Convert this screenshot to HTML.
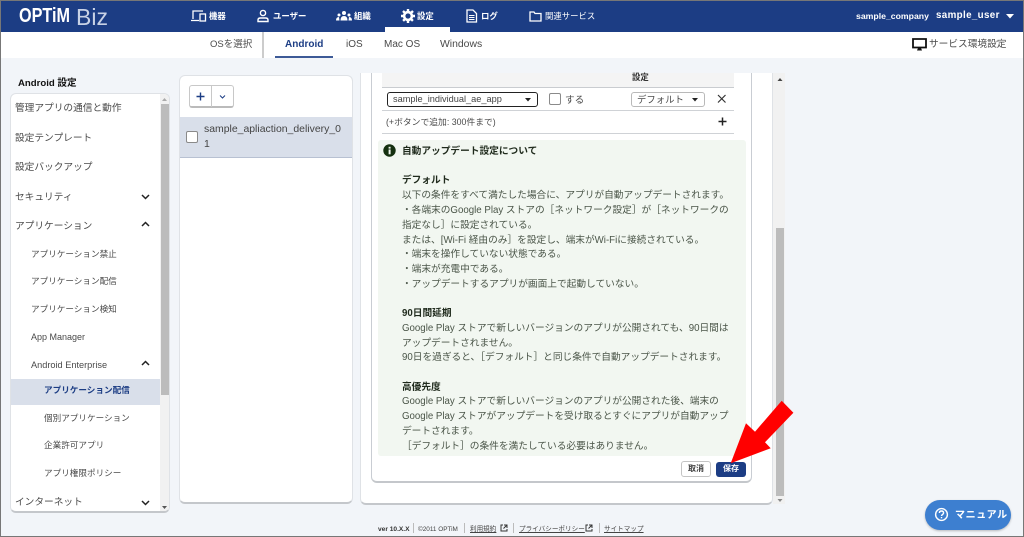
<!DOCTYPE html>
<html lang="ja"><head><meta charset="utf-8"><title>OPTiM Biz</title>
<style>
html,body{margin:0;padding:0;width:1024px;height:537px;overflow:hidden;background:#f2f5f9}
body{position:relative;font-family:"Liberation Sans","Noto Sans CJK JP",sans-serif;color:#444}
.a{position:absolute;box-sizing:border-box}
.t{position:absolute;white-space:nowrap;height:16px;line-height:16px;font-size:9.7px;color:#4a4a4a}
.m{margin-top:2px}
.h{color:#fff;font-size:8.4px;font-weight:700}
.s{font-size:8.6px}
.d{left:402px;font-size:9.7px;color:#4a5548;margin-top:2px}
.b{font-weight:700;color:#1f2a1c}
svg{position:absolute;overflow:visible}
</style></head><body>

<div class="a" style="left:0;top:0;width:1024px;height:32px;background:#1c3d84"></div>
<div class="a" style="left:385px;top:27px;width:65px;height:5px;background:#fff"></div>
<div class="a" style="left:0;top:32px;width:1024px;height:26px;background:#fff"></div>
<div class="a" style="left:262px;top:32px;width:2px;height:26px;background:#ccc"></div>
<div class="a" style="left:275px;top:56px;width:58px;height:2px;background:#3d5a97"></div>

<div class="t" style="left:19px;top:6px;height:20px;line-height:20px;font-size:20px;font-weight:700;color:#fff;transform:scaleX(.81);transform-origin:left">OPTiM</div>
<div class="t" style="left:76px;top:3px;height:28px;line-height:28px;font-size:23px;color:#c8d2e6">Biz</div>

<svg style="left:191px;top:9px" width="16" height="14" fill="none" stroke="#fff" stroke-width="1.3"><path d="M2 10V2H12M0 11.5H8"/><rect x="9" y="5" width="5.5" height="7"/></svg>
<div class="t h" style="left:209px;top:8px">機器</div>
<svg style="left:257px;top:9px" width="14" height="14" fill="none" stroke="#fff" stroke-width="1.4"><circle cx="6" cy="4" r="2.6"/><path d="M1 12.5V11Q1 9 3.5 9H8.5Q11 9 11 11V12.5Z"/></svg>
<div class="t h" style="left:273px;top:8px">ユーザー</div>
<svg style="left:336px;top:10px" width="16" height="12" fill="#fff"><circle cx="8" cy="3" r="2"/><circle cx="3" cy="5" r="1.5"/><circle cx="13" cy="5" r="1.5"/><path d="M4.5 10.5Q4.500 6 8 6T11.500 10.500ZM0 10.500Q0 7 3 7L3.500 10.500ZM16 10.500Q16 7 13 7L12.500 10.500Z"/></svg>
<div class="t h" style="left:354px;top:8px">組織</div>
<svg style="left:401px;top:9px" width="14" height="14" viewBox="0 0 14 14"><circle cx="7" cy="7" r="3.900" fill="none" stroke="#fff" stroke-width="2.600"/><path d="M7 0V14M0 7H14M2 2L12 12M12 2L2 12" stroke="#fff" stroke-width="2.400" stroke-dasharray="2.400 9.200 2.400 20"/></svg>
<div class="t h" style="left:417px;top:8px">設定</div>
<svg style="left:466px;top:9px" width="12" height="14" fill="none" stroke="#fff" stroke-width="1.300"><path d="M1 1H7L10.500 4.500V13H1Z"/><path d="M3 6.500H8.500M3 8.500H8.500M3 10.500H8.500" stroke-width="1"/></svg>
<div class="t h" style="left:481px;top:8px">ログ</div>
<svg style="left:529px;top:11px" width="13" height="11" fill="none" stroke="#fff" stroke-width="1.300"><path d="M1 1H5L6 2.500H12V10H1Z"/></svg>
<div class="t h" style="left:545px;top:8px;font-weight:400">関連サービス</div>
<div class="t h" style="left:856px;top:8px;font-size:8.700px">sample_company</div>
<div class="t h" style="left:936px;top:8px;font-size:9.800px;letter-spacing:.35px">sample_user</div>
<svg style="left:1006px;top:14px" width="9" height="5"><path d="M0 0H8L4 4.500Z" fill="#fff"/></svg>

<div class="t" style="left:210px;top:37px;font-size:9.500px">OSを選択</div>
<div class="t" style="left:285px;top:37px;font-weight:700;color:#1c3d84;font-size:10px">Android</div>
<div class="t" style="left:346px;top:37px;font-size:10px">iOS</div>
<div class="t" style="left:384px;top:37px;font-size:10px">Mac OS</div>
<div class="t" style="left:440px;top:37px;font-size:10.400px">Windows</div>
<svg style="left:912px;top:38px" width="15" height="13"><path d="M1 1H14V9.500H1Z" fill="#fff" stroke="#111" stroke-width="1.800"/><path d="M5 12.500H10L9 10H6Z" fill="#111"/></svg>
<div class="t" style="left:929px;top:37px;font-size:9.700px">サービス環境設定</div>

<div class="t m" style="left:18px;top:74px;font-weight:700;color:#111;font-size:9.600px">Android 設定</div>

<div class="a" style="left:10px;top:93px;width:160px;height:420px;background:#fff;border:1px solid #dfe2e6;border-bottom:2px solid #c4c7cb;border-radius:6px;overflow:hidden">
  <div class="a" style="left:149px;top:0;width:10px;height:420px;background:#f1f1f1"></div>
  <div class="a" style="left:150px;top:10px;width:8px;height:291px;background:#bcbcbc"></div>
  <div class="a" style="left:0;top:285px;width:149px;height:26px;background:#d9dfea"></div>
</div>
<svg style="left:160px;top:97px" width="9" height="5"><path d="M2 4H7L4.500 1Z" fill="#aaa"/></svg>
<svg style="left:160px;top:505px" width="9" height="5"><path d="M2 1H7L4.500 4Z" fill="#555"/></svg>

<div class="t m" style="left:15px;top:99px">管理アプリの通信と動作</div>
<div class="t m" style="left:15px;top:129px">設定テンプレート</div>
<div class="t m" style="left:15px;top:158px">設定バックアップ</div>
<div class="t m" style="left:15px;top:188px">セキュリティ</div>
<div class="t m" style="left:15px;top:217px">アプリケーション</div>
<div class="t s" style="left:31px;top:246px">アプリケーション禁止</div>
<div class="t s" style="left:31px;top:273px">アプリケーション配信</div>
<div class="t s" style="left:31px;top:301px">アプリケーション検知</div>
<div class="t s" style="left:31px;top:329px;font-size:9px">App Manager</div>
<div class="t s" style="left:31px;top:357px;font-size:9.200px">Android Enterprise</div>
<div class="t s" style="left:44px;top:382px;font-weight:700;color:#1c3d84">アプリケーション配信</div>
<div class="t s" style="left:44px;top:410px">個別アプリケーション</div>
<div class="t s" style="left:44px;top:437px">企業許可アプリ</div>
<div class="t s" style="left:44px;top:465px">アプリ権限ポリシー</div>
<div class="t m" style="left:15px;top:493px">インターネット</div>
<svg style="left:141px;top:194px" width="9" height="6" fill="none" stroke="#222" stroke-width="1.500"><path d="M1 1L4.500 4.500L8 1"/></svg>
<svg style="left:141px;top:221px" width="9" height="6" fill="none" stroke="#222" stroke-width="1.500"><path d="M1 5L4.500 1.500L8 5"/></svg>
<svg style="left:141px;top:360px" width="9" height="6" fill="none" stroke="#222" stroke-width="1.500"><path d="M1 5L4.500 1.500L8 5"/></svg>
<svg style="left:141px;top:500px" width="9" height="6" fill="none" stroke="#222" stroke-width="1.500"><path d="M1 1L4.500 4.500L8 1"/></svg>

<div class="a" style="left:179px;top:75px;width:174px;height:429px;background:#fff;border:1px solid #dfe2e6;border-bottom:2px solid #c4c7cb;border-radius:6px;overflow:hidden">
  <div class="a" style="left:0;top:41px;width:172px;height:41px;background:#d9dfea;border-bottom:1px solid #b8c1d2"></div>
</div>
<div class="a" style="left:189px;top:85px;width:45px;height:23px;background:#fff;border:1px solid #c8c8c8;border-bottom:2px solid #bbb;border-radius:3px"></div>
<div class="a" style="left:211px;top:85px;width:1px;height:22px;background:#c8c8c8"></div>
<svg style="left:196px;top:92px" width="9" height="9"><path d="M4.500 .500V8.500M.500 4.500H8.500" stroke="#1c3d84" stroke-width="1.400"/></svg>
<svg style="left:219px;top:95px" width="7" height="4" fill="none" stroke="#1c3d84" stroke-width="1"><path d="M1 .500L3.500 3L6 .500"/></svg>
<div class="a" style="left:186px;top:131px;width:12px;height:12px;background:#fff;border:1px solid #8a8a8a;border-radius:2px"></div>
<div class="t" style="left:204px;top:122px;font-size:10.450px;color:#444">sample_apliaction_delivery_0</div>
<div class="t" style="left:204px;top:136px;font-size:10.500px;color:#444">1</div>

<div class="a" style="left:360px;top:73px;width:413px;height:432px;background:#fff;border:1px solid #dfe2e6;border-top:0;border-bottom:2px solid #c4c7cb;border-radius:0 0 6px 6px"></div>
<div class="a" style="left:773px;top:73px;width:12px;height:431px;background:#f1f1f1"></div>
<div class="a" style="left:776px;top:228px;width:8px;height:268px;background:#bcbcbc"></div>
<svg style="left:776px;top:77px" width="8" height="5"><path d="M1.500 4H6.500L4 1Z" fill="#444"/></svg>
<svg style="left:776px;top:498px" width="8" height="5"><path d="M1.500 1H6.500L4 4Z" fill="#888"/></svg>

<div class="a" style="left:371px;top:73px;width:381px;height:410px;background:#fff;border:1px solid #c9cdd3;border-top:0;border-bottom:2px solid #c4c7cb;border-radius:0 0 6px 6px"></div>
<div class="a" style="left:382px;top:73px;width:352px;height:15px;background:#f4f4f4;border-bottom:1px solid #c9ccd0"></div>
<div class="t b" style="left:632px;top:69px;font-size:8.400px;color:#333">設定</div>
<div class="a" style="left:382px;top:110px;width:352px;height:1px;background:#cfd2d6"></div>
<div class="a" style="left:382px;top:133px;width:352px;height:1px;background:#cfd2d6"></div>

<div class="a" style="left:387px;top:92px;width:151px;height:15px;background:#fff;border:1px solid #222;border-radius:3px"></div>
<div class="t" style="left:393px;top:91px;font-size:9.200px;color:#444">sample_individual_ae_app</div>
<svg style="left:525px;top:98px" width="7" height="4"><path d="M0 0H6L3 3.500Z" fill="#222"/></svg>
<div class="a" style="left:549px;top:93px;width:12px;height:12px;background:#fff;border:1px solid #8a8a8a;border-radius:2px"></div>
<div class="t m" style="left:565px;top:91px;font-size:9.600px">する</div>
<div class="a" style="left:631px;top:92px;width:74px;height:15px;background:#fff;border:1px solid #b9b9b9;border-radius:3px"></div>
<div class="t" style="left:637px;top:92px;font-size:9.400px">デフォルト</div>
<svg style="left:692px;top:98px" width="7" height="4"><path d="M0 0H6L3 3.500Z" fill="#222"/></svg>
<svg style="left:717px;top:94px" width="10" height="10"><path d="M1 1L8.500 8.500M8.500 1L1 8.500" stroke="#333" stroke-width="1.200"/></svg>
<div class="t" style="left:386px;top:114px;font-size:8.800px">(+ボタンで追加: 300件まで)</div>
<svg style="left:718px;top:117px" width="9" height="9"><path d="M4.500 .500V8.500M.500 4.500H8.500" stroke="#222" stroke-width="1.500"/></svg>

<div class="a" style="left:378px;top:140px;width:368px;height:316px;background:#f2f7f1;border-radius:3px"></div>
<svg style="left:383px;top:144px" width="13" height="13"><circle cx="6.500" cy="6.500" r="6.200" fill="#14300f"/><rect x="5.600" y="5.500" width="2" height="4.800" fill="#f2f7f1"/><rect x="5.600" y="2.800" width="2" height="1.800" fill="#f2f7f1"/></svg>

<div class="t d b" style="top:142px">自動アップデート設定について</div>
<div class="t d b" style="top:171px">デフォルト</div>
<div class="t d" style="top:186px">以下の条件をすべて満たした場合に、アプリが自動アップデートされます。</div>
<div class="t d" style="top:201px">・各端末のGoogle Play ストアの［ネットワーク設定］が［ネットワークの</div>
<div class="t d" style="top:216px">指定なし］に設定されている。</div>
<div class="t d" style="top:231px">または、[Wi-Fi 経由のみ］を設定し、端末がWi-Fiに接続されている。</div>
<div class="t d" style="top:245px">・端末を操作していない状態である。</div>
<div class="t d" style="top:260px">・端末が充電中である。</div>
<div class="t d" style="top:275px">・アップデートするアプリが画面上で起動していない。</div>
<div class="t d b" style="top:304px">90日間延期</div>
<div class="t d" style="top:319px">Google Play ストアで新しいバージョンのアプリが公開されても、90日間は</div>
<div class="t d" style="top:334px">アップデートされません。</div>
<div class="t d" style="top:348px">90日を過ぎると、［デフォルト］と同じ条件で自動アップデートされます。</div>
<div class="t d b" style="top:378px">高優先度</div>
<div class="t d" style="top:392px">Google Play ストアで新しいバージョンのアプリが公開された後、端末の</div>
<div class="t d" style="top:407px">Google Play ストアがアップデートを受け取るとすぐにアプリが自動アップ</div>
<div class="t d" style="top:422px">デートされます。</div>
<div class="t d" style="top:437px">［デフォルト］の条件を満たしている必要はありません。</div>

<div class="a" style="left:681px;top:461px;width:30px;height:16px;background:#fff;border:1px solid #c4c4c4;border-radius:3px"></div>
<div class="t" style="left:688px;top:461px;font-size:8px;font-weight:700;color:#444">取消</div>
<div class="a" style="left:716px;top:462px;width:30px;height:15px;background:#1c3d84;border-radius:3px"></div>
<div class="t" style="left:723px;top:461px;font-size:8px;font-weight:700;color:#fff">保存</div>

<svg style="left:0;top:0" width="1024" height="537"><polygon points="781.700,400.700 793.400,412.800 765,442.300 770.700,448.300 730.700,463.300 746,423.300 755,431.700" fill="#ff0000"/></svg>

<div class="a" style="left:925px;top:500px;width:86px;height:30px;background:#3d7fd0;border-radius:15px;box-shadow:0 1px 2px rgba(0,0,0,.25)"></div>
<svg style="left:934px;top:507px" width="15" height="15" fill="none" stroke="#fff" stroke-width="1.400"><circle cx="7.500" cy="7.500" r="5.900"/><path d="M5.400 6Q5.400 4 7.500 4T9.600 6C9.600 7.500 7.500 7.500 7.500 9"/><path d="M7.500 10V11.300"/></svg>
<div class="t m" style="left:955px;top:506px;font-size:10px;font-weight:700;color:#fff;letter-spacing:.6px">マニュアル</div>

<div class="t m" style="left:378px;top:520px;font-size:6.600px;font-weight:700;color:#333">ver 10.X.X</div>
<div class="a" style="left:413px;top:523px;width:1px;height:10px;background:#bbb"></div>
<div class="t m" style="left:418px;top:520px;font-size:6.400px;color:#444">©2011 OPTiM</div>
<div class="a" style="left:464px;top:523px;width:1px;height:10px;background:#bbb"></div>
<div class="t m" style="left:470px;top:520px;font-size:6.600px;text-decoration:underline;color:#444">利用規約</div>
<svg style="left:500px;top:524px" width="8" height="8" fill="none" stroke="#333" stroke-width="1"><path d="M3 1H1V7H7V5M4 1H7V4M7 1L3.500 4.500"/></svg>
<div class="a" style="left:513px;top:523px;width:1px;height:10px;background:#bbb"></div>
<div class="t m" style="left:519px;top:520px;font-size:6.600px;text-decoration:underline;color:#444">プライバシーポリシー</div>
<svg style="left:585px;top:524px" width="8" height="8" fill="none" stroke="#333" stroke-width="1"><path d="M3 1H1V7H7V5M4 1H7V4M7 1L3.500 4.500"/></svg>
<div class="a" style="left:599px;top:523px;width:1px;height:10px;background:#bbb"></div>
<div class="t m" style="left:604px;top:520px;font-size:6.600px;text-decoration:underline;color:#444">サイトマップ</div>

<div class="a" style="left:0;top:0;width:1024px;height:537px;border:1px solid #777;pointer-events:none"></div>
</body></html>
